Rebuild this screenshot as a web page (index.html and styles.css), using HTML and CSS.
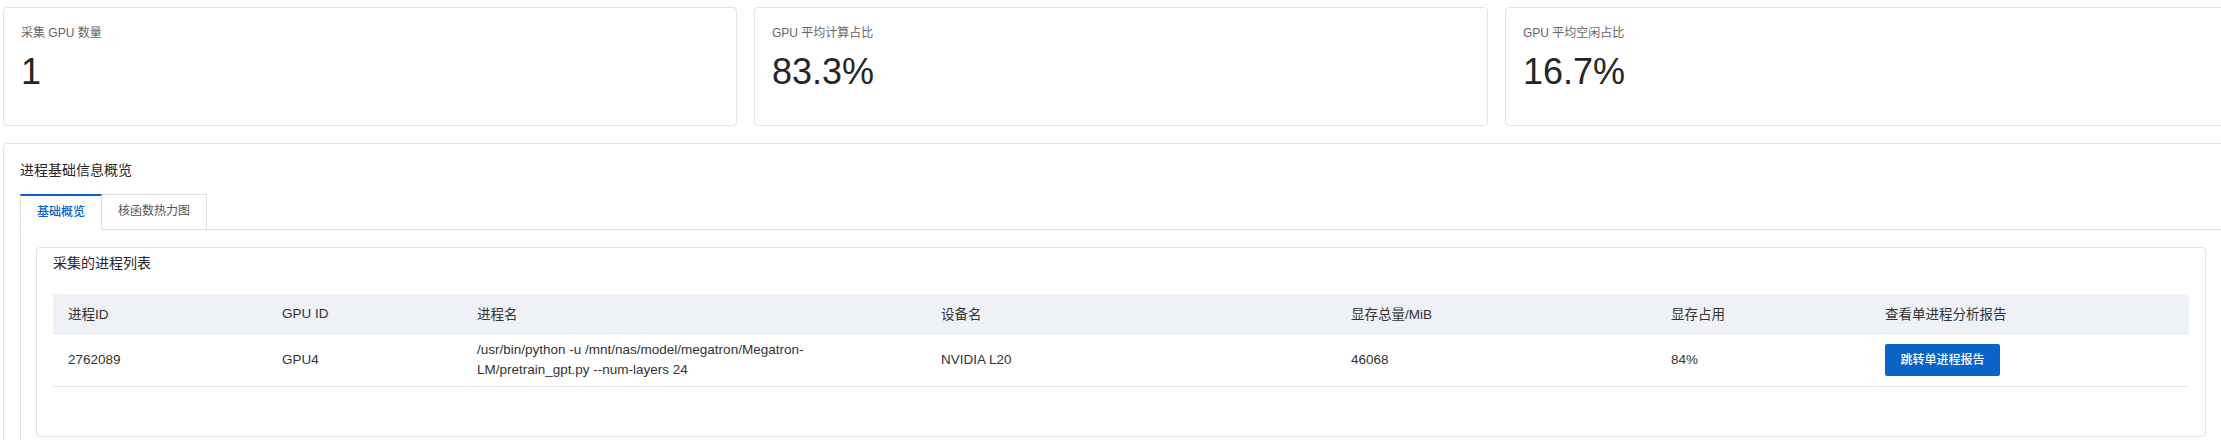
FILE: index.html
```html
<!DOCTYPE html>
<html lang="zh-CN">
<head>
    <meta charset="UTF-8">
    <meta name="viewport" content="width=device-width, initial-scale=1.0">
    <title>进程基础信息概览</title>
    <link rel="stylesheet" href="styles.css">
</head>
<body>
    <div class="page">
        <div class="stats">
            <div class="stat-card">
                <div class="stat-label">采集 GPU 数量</div>
                <div class="stat-value">1</div>
            </div>
            <div class="stat-card">
                <div class="stat-label">GPU 平均计算占比</div>
                <div class="stat-value">83.3%</div>
            </div>
            <div class="stat-card">
                <div class="stat-label">GPU 平均空闲占比</div>
                <div class="stat-value">16.7%</div>
            </div>
        </div>

        <div class="panel">
            <div class="panel-title">进程基础信息概览</div>
            <div class="tabs">
                <a class="tab active" href="javascript:;">基础概览</a>
                <a class="tab" href="javascript:;">核函数热力图</a>
            </div>
            <div class="tab-body">
                <div class="sub-panel">
                    <div class="sub-title">采集的进程列表</div>
                    <table class="proc-table">
                        <colgroup>
                            <col class="col-pid">
                            <col class="col-gpu">
                            <col class="col-name">
                            <col class="col-dev">
                            <col class="col-mem">
                            <col class="col-use">
                            <col class="col-op">
                        </colgroup>
                        <thead>
                            <tr>
                                <th>进程ID</th>
                                <th>GPU ID</th>
                                <th>进程名</th>
                                <th>设备名</th>
                                <th>显存总量/MiB</th>
                                <th>显存占用</th>
                                <th>查看单进程分析报告</th>
                            </tr>
                        </thead>
                        <tbody>
                            <tr>
                                <td>2762089</td>
                                <td>GPU4</td>
                                <td class="cell-name">/usr/bin/python -u /mnt/nas/model/megatron/Megatron-LM/pretrain_gpt.py --num-layers 24</td>
                                <td>NVIDIA L20</td>
                                <td>46068</td>
                                <td>84%</td>
                                <td><a class="btn" href="javascript:;">跳转单进程报告</a></td>
                            </tr>
                        </tbody>
                    </table>
                </div>
            </div>
        </div>
    </div>
</body>
</html>
```

FILE: styles.css
```css
*{
    margin: 0;
    padding: 0;
    box-sizing: border-box;
}
html, body{
    overflow: hidden;
    background-color: #fff;
}
body{
    font-family: "Liberation Sans", "Noto Sans CJK SC", sans-serif;
    color: #333;
}
.page{
    width: 2236px;
    margin-left: 3px;
    padding-top: 7px;
}
.stats{
    display: grid;
    grid-template-columns: repeat(3, 1fr);
    gap: 17px;
}
.stat-card{
    height: 119px;
    border: 1px solid #e3e3e3;
    border-radius: 4px;
    padding: 16px 17px 0;
}
.stat-label{
    font-size: 12px;
    line-height: 18px;
    color: #666;
}
.stat-value{
    margin-top: 8px;
    font-size: 36px;
    line-height: 44px;
    color: #262626;
}
.panel{
    margin-top: 17px;
    border: 1px solid #e3e3e3;
    border-radius: 4px;
    padding: 16px 16px 40px;
}
.panel-title{
    font-size: 14px;
    line-height: 20px;
    color: #262626;
}
.tabs{
    display: flex;
    margin-top: 14px;
    position: relative;
    z-index: 1;
}
.tab{
    display: block;
    height: 36px;
    padding: 0 16px;
    font-size: 12px;
    line-height: 33px;
    color: #555;
    text-decoration: none;
    border: 1px solid #dedede;
    border-left: none;
    margin-bottom: -1px;
    background-color: #fff;
}
.tab.active{
    color: #0a64c8;
    font-weight: 500;
    border-top: 2px solid #0a64c8;
    border-left: 1px solid #dedede;
    border-bottom-color: #fff;
    line-height: 32px;
}
.tab-body{
    border-top: 1px solid #dedede;
    border-left: 1px solid #dedede;
    border-right: 1px solid #dedede;
    padding: 17px 15px 20px;
}
.sub-panel{
    border: 1px solid #e3e3e3;
    border-radius: 4px;
    padding: 5px 16px 49px;
}
.sub-title{
    font-size: 14px;
    line-height: 20px;
    color: #262626;
}
.proc-table{
    margin-top: 21px;
    width: 100%;
    table-layout: fixed;
    border-collapse: collapse;
    font-size: 13.5px;
    color: #333;
}
.col-pid{ width: 214px; }
.col-gpu{ width: 195px; }
.col-name{ width: 464px; }
.col-dev{ width: 410px; }
.col-mem{ width: 320px; }
.col-use{ width: 214px; }
.col-op{ width: 319px; }
.proc-table th{
    height: 39px;
    padding: 0 15px;
    text-align: left;
    font-weight: normal;
    background-color: #eef1f6;
    border-bottom: 1px solid #e3e6ec;
}
.proc-table td{
    height: 51px;
    padding: 6px 15px;
    line-height: 20px;
    border-bottom: 1px solid #e3e3e3;
    vertical-align: middle;
}
.proc-table td.cell-name{
    padding-right: 50px;
}
.btn{
    display: inline-block;
    width: 115px;
    height: 32px;
    line-height: 32px;
    text-align: center;
    font-size: 12px;
    font-weight: 500;
    color: #fff;
    text-decoration: none;
    background-color: #0a64c8;
    border-radius: 2px;
}
```
